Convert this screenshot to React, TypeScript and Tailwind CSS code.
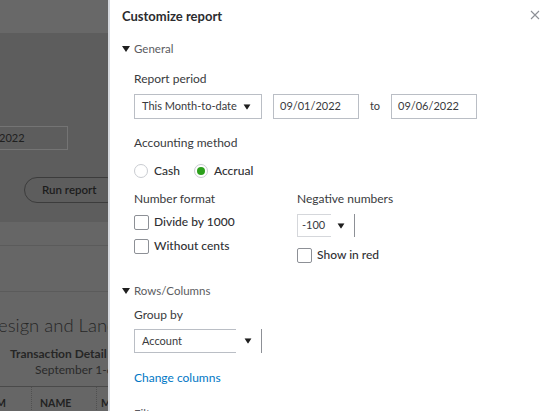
import React from "react";

const Tri = ({ className = "" }: { className?: string }) => (
  <svg width="8" height="6" viewBox="0 0 8 6" className={className}>
    <path d="M0 0 L8 0 L4 6 Z" fill="#1f1f1f" />
  </svg>
);

const Checkbox = () => (
  <span className="inline-block w-[15px] h-[15px] border border-[#8d9096] rounded-[2px] bg-white shrink-0" />
);

function Background() {
  return (
    <div className="w-[108px] h-[411px] shrink-0 overflow-hidden flex flex-col bg-[#666666] text-[#202020]">
      <div className="h-[33px] shrink-0 bg-[#686868]" />
      <div className="h-[189px] shrink-0 bg-[#5d5d5d] flex flex-col">
        <div className="mt-[93px] h-[24px] w-[68px] border border-[#747474] border-l-0 flex items-center text-[11px]">
          <span className="ml-[-1px]">2022</span>
        </div>
        <div className="mt-[17px] flex items-start">
          <div className="ml-[4px] w-px h-[47px] bg-[#777777]" />
          <div className="ml-[20px] mt-[10px] h-[26px] w-[96px] shrink-0 rounded-full border border-[#3c3c3c] flex items-center pl-[17px] text-[11.5px] font-semibold text-[#1c1c1c]">
            Run report
          </div>
        </div>
      </div>
      <div className="h-[24px] shrink-0 bg-[#666666] border-b border-[#5b5b5b]" />
      <div className="h-[46px] shrink-0 bg-[#666666] border-b border-[#5b5b5b]" />
      <div className="flex flex-col shrink-0">
        <div className="mt-[21px] ml-[-2px] whitespace-nowrap text-[18.5px] font-light leading-[24px] text-[#262626]">
          esign and Landscaping
        </div>
        <div className="mt-[9px] ml-[10px] whitespace-nowrap text-[12px] font-bold leading-[16px] text-[#262626]">
          Transaction Detail by Account
        </div>
        <div className="ml-[35px] whitespace-nowrap text-[12px] leading-[16px] text-[#2a2a2a]">
          September 1-6, 2022
        </div>
        <div className="mt-[8px] border-t border-[#4a4a4a] h-[34px] flex items-center text-[10.5px] font-bold text-[#222]">
          <div className="w-[32px] shrink-0 h-full flex items-center border-r border-dotted border-[#505050]">
            <span className="ml-[-4px]">M</span>
          </div>
          <div className="w-[65px] shrink-0 h-full flex items-center border-r border-dotted border-[#505050] pl-[8px]">NAME</div>
          <div className="pl-[4px] shrink-0">MEMO</div>
        </div>
      </div>
    </div>
  );
}

function Panel() {
  return (
    <div className="flex-1 h-[411px] bg-white border-l-2 border-[#d6d9de] relative overflow-hidden text-[#393a3d]">
      <svg className="absolute right-[6px] top-[10px]" width="10" height="10" viewBox="0 0 10 10">
        <path d="M1 1 L9 9 M9 1 L1 9" stroke="#8d9096" strokeWidth="1.1" />
      </svg>
      <div className="pl-[12px] flex flex-col">
        <div className="h-[34px] flex items-center text-[13px] font-bold text-[#2b2c2f]">Customize report</div>
        <div className="h-[30px] flex items-center gap-[4px] text-[11.5px] text-[#5b5c61]">
          <Tri />
          <span>General</span>
        </div>
        <div className="pl-[12px] flex flex-col">
          <div className="h-[30px] flex items-center text-[12px]">Report period</div>
          <div className="h-[26px] flex items-start">
            <div className="h-[25px] w-[128px] border border-[#babec5] flex items-center justify-between pl-[7px] pr-[10px] text-[11px] text-[#393a3d]">
              <span>This Month-to-date</span>
              <Tri className="scale-90" />
            </div>
            <div className="ml-[11px] h-[25px] w-[86px] border border-[#babec5] flex items-center pl-[6px] text-[11px]">09/01/2022</div>
            <div className="w-[32px] text-center text-[11px]">
              <div className="h-[25px] flex items-center justify-center">to</div>
            </div>
            <div className="h-[25px] w-[86px] border border-[#babec5] flex items-center pl-[6px] text-[11px]">09/06/2022</div>
          </div>
          <div className="mt-[8px] h-[30px] flex items-center text-[12px]">Accounting method</div>
          <div className="h-[26px] flex items-center text-[12px] font-medium text-[#2f3033]">
            <span className="w-[14px] h-[14px] rounded-full border border-[#c9ccd1] bg-white" />
            <span className="ml-[6px]">Cash</span>
            <span className="ml-[14px] w-[14px] h-[14px] rounded-full border border-[#c9ccd1] bg-white flex items-center justify-center">
              <span className="w-[8px] h-[8px] rounded-full bg-[#2ca01c]" />
            </span>
            <span className="ml-[6px]">Accrual</span>
          </div>
          <div className="mt-[4px] flex">
            <div className="w-[163px] flex flex-col">
              <div className="h-[22px] flex items-center text-[12px]">Number format</div>
              <div className="h-[24px] flex items-center gap-[5px] text-[12px] font-medium text-[#2f3033]">
                <Checkbox />
                <span>Divide by 1000</span>
              </div>
              <div className="h-[24px] flex items-center gap-[5px] text-[12px] font-medium text-[#2f3033]">
                <Checkbox />
                <span>Without cents</span>
              </div>
            </div>
            <div className="flex flex-col">
              <div className="h-[22px] flex items-center text-[12px]">Negative numbers</div>
              <div className="mt-[4px] h-[23px] flex">
                <div className="w-[34px] border border-r-0 border-[#d5d7db] flex items-center pl-[4px] text-[11px]">-100</div>
                <div className="w-[24px] border-r border-[#8d9096] flex items-center pl-[6px]">
                  <Tri className="scale-90" />
                </div>
              </div>
              <div className="mt-[7px] h-[22px] flex items-center gap-[5px] text-[12px] font-medium text-[#2f3033]">
                <Checkbox />
                <span>Show in red</span>
              </div>
            </div>
          </div>
        </div>
        <div className="mt-[10px] h-[30px] flex items-center gap-[4px] text-[11.5px] text-[#5b5c61]">
          <Tri />
          <span>Rows/Columns</span>
        </div>
        <div className="pl-[12px] flex flex-col">
          <div className="h-[18px] flex items-center text-[12px]">Group by</div>
          <div className="mt-[5px] h-[24px] flex">
            <div className="w-[102px] border border-r-0 border-[#babec5] flex items-center pl-[7px] text-[11px]">Account</div>
            <div className="w-[26px] border-r border-[#8d9096] flex items-center pl-[8px]">
              <Tri className="scale-90" />
            </div>
          </div>
          <div className="mt-[13px] h-[24px] flex items-center text-[12px] text-[#0077c5]">Change columns</div>
        </div>
        <div className="mt-[10px] h-[28px] flex items-center gap-[4px] text-[11.5px] text-[#5b5c61]">
          <Tri />
          <span>Filter</span>
        </div>
      </div>
    </div>
  );
}

export default function App() {
  return (
    <div className="flex w-[546px] h-[411px] overflow-hidden" style={{ fontFamily: "Lato, 'Noto Sans', sans-serif" }}>
      <Background />
      <Panel />
    </div>
  );
}
